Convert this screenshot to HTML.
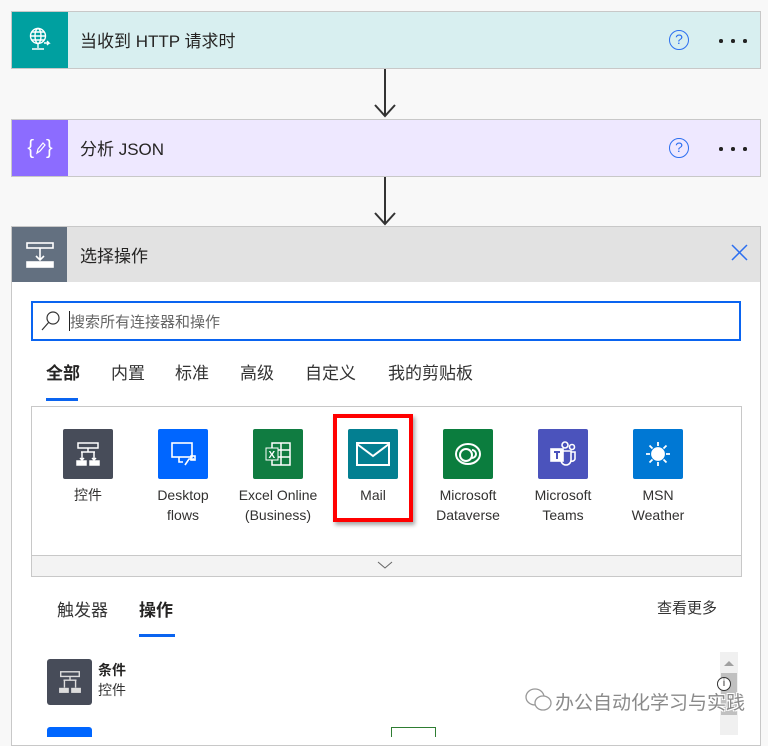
<!DOCTYPE html>
<html><head><meta charset="utf-8"><style>
*{margin:0;padding:0;box-sizing:border-box}
body{width:768px;height:735px;overflow:hidden;background:#f8f8f8;font-family:"Liberation Sans","Noto Sans CJK SC",sans-serif;color:#252423;position:relative}
.abs{position:absolute}
.card{position:absolute;left:11px;width:750px;height:58px;border:1px solid #c8c8c8}
.card .ic{position:absolute;left:0;top:0;width:56px;height:56px;display:flex;align-items:center;justify-content:center}
.card .t{position:absolute;left:68px;top:15px;font-size:17px}
.help{position:absolute;left:657px;top:18px;width:20px;height:20px;border:1.5px solid #2c6ff0;border-radius:50%;color:#2c6ff0;font-size:14px;text-align:center;line-height:17px}
.dots{position:absolute;left:707px;top:27px;width:28px;height:4px}
.dots i{position:absolute;top:0;width:3.5px;height:3.5px;border-radius:50%;background:#222}
.arrow{position:absolute;left:384px;width:2px;background:#333}
.conn{position:absolute;top:429px;width:90px;text-align:center;font-size:14px;line-height:20px;color:#323130}
.conn .sq{width:50px;height:50px;margin:0 auto 6px;border-radius:2px;display:flex;align-items:center;justify-content:center}
</style></head><body>

<div class="card" style="top:11px;background:#d8eff0">
 <div class="ic" style="background:#00a0a0"><svg width="26" height="26" viewBox="0 0 26 26" fill="none" stroke="#fff" stroke-width="1.4"><circle cx="11" cy="9" r="7.5"/><ellipse cx="11" cy="9" rx="3" ry="7.5"/><path d="M3.5 9h15M5 5h12M5 13h12M11 17v4M5 22h12M17 16h5l-2-2M22 16l-2 2"/></svg></div>
 <div class="t">当收到 HTTP 请求时</div>
 <div class="help">?</div><div class="dots"><i style="left:0"></i><i style="left:12px"></i><i style="left:24px"></i></div>
</div>
<div class="arrow" style="top:69px;height:47px"></div>
<svg class="abs" style="left:374px;top:104px" width="22" height="14"><path d="M1 1l10 11L21 1" stroke="#333" stroke-width="2" fill="none"/></svg>

<div class="card" style="top:119px;background:#eee8ff">
 <div class="ic" style="background:#8c6cff;color:#fff;font-size:20px">{<svg width="12" height="14" viewBox="0 0 12 14"><path d="M3 12l1-4 5-6 2 2-5 6z" stroke="#fff" fill="none" stroke-width="1.2"/></svg>}</div>
 <div class="t">分析 JSON</div>
 <div class="help">?</div><div class="dots"><i style="left:0"></i><i style="left:12px"></i><i style="left:24px"></i></div>
</div>
<div class="arrow" style="top:177px;height:47px"></div>
<svg class="abs" style="left:374px;top:212px" width="22" height="14"><path d="M1 1l10 11L21 1" stroke="#333" stroke-width="2" fill="none"/></svg>

<div class="abs" style="left:11px;top:226px;width:750px;height:520px;border:1px solid #c8c8c8;background:#fff"></div>
<div class="abs" style="left:12px;top:227px;width:748px;height:55px;background:#e2e2e2"></div>
<div class="abs" style="left:12px;top:227px;width:55px;height:55px;background:#637080;display:flex;align-items:center;justify-content:center"><svg width="30" height="28" viewBox="0 0 30 28" fill="none" stroke="#fff" stroke-width="1.6"><rect x="2" y="2" width="26" height="5"/><path d="M15 7v12M11 15l4 4 4-4"/><rect x="2" y="21" width="26" height="5" fill="#fff"/></svg></div>
<div class="abs" style="left:80px;top:242px;font-size:17px">选择操作</div>
<svg class="abs" style="left:731px;top:244px" width="17" height="17"><path d="M1 1l15 15M16 1L1 16" stroke="#2c6ff0" stroke-width="1.5"/></svg>

<div class="abs" style="left:31px;top:301px;width:710px;height:40px;border:2px solid #0a64f0;background:#fff"></div>
<svg class="abs" style="left:40px;top:310px" width="22" height="22"><circle cx="13" cy="8" r="6" stroke="#333" fill="none" stroke-width="1.2"/><path d="M9 12l-7 8" stroke="#333" stroke-width="1.2"/></svg>
<div class="abs" style="left:69px;top:311px;width:1px;height:20px;background:#222"></div>
<div class="abs" style="left:70px;top:311px;font-size:15px;color:#666">搜索所有连接器和操作</div>

<div class="abs" style="left:46px;top:359px;font-size:17px;font-weight:bold">全部</div>
<div class="abs" style="left:46px;top:398px;width:32px;height:3px;background:#0a64f0"></div>
<div class="abs" style="left:111px;top:359px;font-size:17px;color:#333">内置</div>
<div class="abs" style="left:175px;top:359px;font-size:17px;color:#333">标准</div>
<div class="abs" style="left:240px;top:359px;font-size:17px;color:#333">高级</div>
<div class="abs" style="left:305px;top:359px;font-size:17px;color:#333">自定义</div>
<div class="abs" style="left:388px;top:359px;font-size:17px;color:#333">我的剪贴板</div>

<div class="abs" style="left:31px;top:406px;width:711px;height:171px;border:1px solid #c8c8c8;background:#fff"></div>
<div class="abs" style="left:32px;top:555px;width:709px;height:21px;background:#f3f3f3;border-top:1px solid #c8c8c8"></div>
<svg class="abs" style="left:377px;top:561px" width="16" height="9"><path d="M1 1l7 6 7-6" stroke="#666" fill="none"/></svg>

<div class="conn" style="left:43px"><div class="sq" style="background:#474c59"><svg width="28" height="26" viewBox="0 0 28 26" fill="none" stroke="#fff" stroke-width="1.5"><rect x="4" y="2" width="20" height="5"/><path d="M14 7v4M7 11h14M8 11v8M20 11v8M6 17l2 2 2-2M18 17l2 2 2-2"/><rect x="3" y="20" width="9" height="4" fill="#fff"/><rect x="16" y="20" width="9" height="4" fill="#fff"/></svg></div>控件</div>
<div class="conn" style="left:138px"><div class="sq" style="background:#0066ff"><svg width="30" height="30" viewBox="0 0 30 30" fill="none" stroke="#fff" stroke-width="1.6"><rect x="4" y="4" width="20" height="14"/><path d="M11 18v5h4M17 26l4-6h5"/><rect x="23" y="17" width="4" height="4"/></svg></div>Desktop<br>flows</div>
<div class="conn" style="left:233px"><div class="sq" style="background:#107c41"><svg width="30" height="30" viewBox="0 0 30 30"><rect x="9" y="4" width="18" height="22" fill="none" stroke="#fff" stroke-width="1.5"/><path d="M9 11h18M9 18h18M18 4v22" stroke="#fff" stroke-width="1.5"/><rect x="3" y="9" width="12" height="12" fill="#107c41" stroke="#fff"/><text x="5.5" y="19" fill="#fff" font-size="10" font-family="Liberation Sans" font-weight="bold">X</text></svg></div>Excel Online<br>(Business)</div>
<div class="conn" style="left:328px"><div class="sq" style="background:#037f91"><svg width="36" height="26" viewBox="0 0 36 26" fill="none" stroke="#fff" stroke-width="2"><rect x="2" y="2" width="32" height="22"/><path d="M2 3l16 12L34 3"/></svg></div>Mail</div>
<div class="conn" style="left:423px"><div class="sq" style="background:#0b7d3e"><svg width="32" height="32" viewBox="0 0 32 32" fill="none" stroke="#fff" stroke-width="2"><ellipse cx="16" cy="16" rx="12" ry="10"/><circle cx="14" cy="17" r="6"/><path d="M20 12a4 4 0 0 1 0 8"/></svg></div>Microsoft<br>Dataverse</div>
<div class="conn" style="left:518px"><div class="sq" style="background:#4b53bc"><svg width="32" height="32" viewBox="0 0 32 32" fill="none" stroke="#fff" stroke-width="1.6"><circle cx="18" cy="7" r="3"/><circle cx="25" cy="9" r="2.5"/><path d="M14 13h10v9a5 5 0 0 1-10 0zM24 14h4v7a3 3 0 0 1-4 2"/><rect x="4" y="11" width="12" height="12" fill="#fff"/><path d="M7 14h6M10 14v7" stroke="#4b53bc" stroke-width="2"/></svg></div>Microsoft<br>Teams</div>
<div class="conn" style="left:613px"><div class="sq" style="background:#0078d4"><svg width="30" height="30" viewBox="0 0 30 30" stroke="#fff" stroke-width="1.8"><circle cx="15" cy="15" r="6" fill="#fff"/><path d="M15 3v4M15 23v4M3 15h4M23 15h4M6.5 6.5l3 3M20.5 20.5l3 3M23.5 6.5l-3 3M9.5 20.5l-3 3"/></svg></div>MSN<br>Weather</div>

<div class="abs" style="left:333px;top:414px;width:80px;height:108px;border:4px solid #f00;box-shadow:2px 3px 4px rgba(0,0,0,.35)"></div>

<div class="abs" style="left:57px;top:596px;font-size:17px;color:#333">触发器</div>
<div class="abs" style="left:139px;top:596px;font-size:17px;font-weight:bold">操作</div>
<div class="abs" style="left:139px;top:634px;width:36px;height:3px;background:#0a64f0"></div>
<div class="abs" style="left:657px;top:597px;font-size:15px;color:#333">查看更多</div>

<div class="abs" style="left:47px;top:659px;width:45px;height:46px;background:#474c59;border-radius:3px;display:flex;align-items:center;justify-content:center"><svg width="26" height="26" viewBox="0 0 28 26" fill="none" stroke="#ddd" stroke-width="1.5"><rect x="4" y="2" width="20" height="5"/><path d="M14 7v4M7 11h14M8 11v8M20 11v8"/><rect x="3" y="20" width="9" height="4" fill="#ddd"/><rect x="16" y="20" width="9" height="4" fill="#ddd"/></svg></div>
<div class="abs" style="left:98px;top:660px;font-size:14px;font-weight:bold">条件</div>
<div class="abs" style="left:98px;top:680px;font-size:14px;color:#333">控件</div>

<div class="abs" style="left:720px;top:652px;width:18px;height:83px;background:#f0f0f0"></div>
<svg class="abs" style="left:724px;top:660px" width="10" height="7"><path d="M0 6l5-5 5 5z" fill="#a0a0a0"/></svg>
<div class="abs" style="left:721px;top:673px;width:16px;height:42px;background:#c0c0c0"></div>
<div class="abs" style="left:717px;top:677px;width:14px;height:14px;border:1px solid #333;border-radius:50%;font-size:10px;text-align:center;line-height:12px;background:#fff">i</div>

<div class="abs" style="left:47px;top:727px;width:45px;height:10px;background:#0066ff;border-radius:3px 3px 0 0"></div>
<div class="abs" style="left:391px;top:727px;width:45px;height:10px;border:1px solid #2e7d32;border-bottom:none"></div>

<svg class="abs" style="left:524px;top:686px" width="30" height="28" fill="none" stroke="#999" stroke-width="1.3"><ellipse cx="11" cy="11" rx="9" ry="8"/><ellipse cx="19" cy="17" rx="8" ry="7" fill="#fff"/></svg>
<div class="abs" style="left:555px;top:688px;font-size:19px;color:#8a8a8a;text-shadow:1px 1px 0 #fff,-1px -1px 0 #fff,1px -1px 0 #fff,-1px 1px 0 #fff">办公自动化学习与实践</div>
</body></html>
